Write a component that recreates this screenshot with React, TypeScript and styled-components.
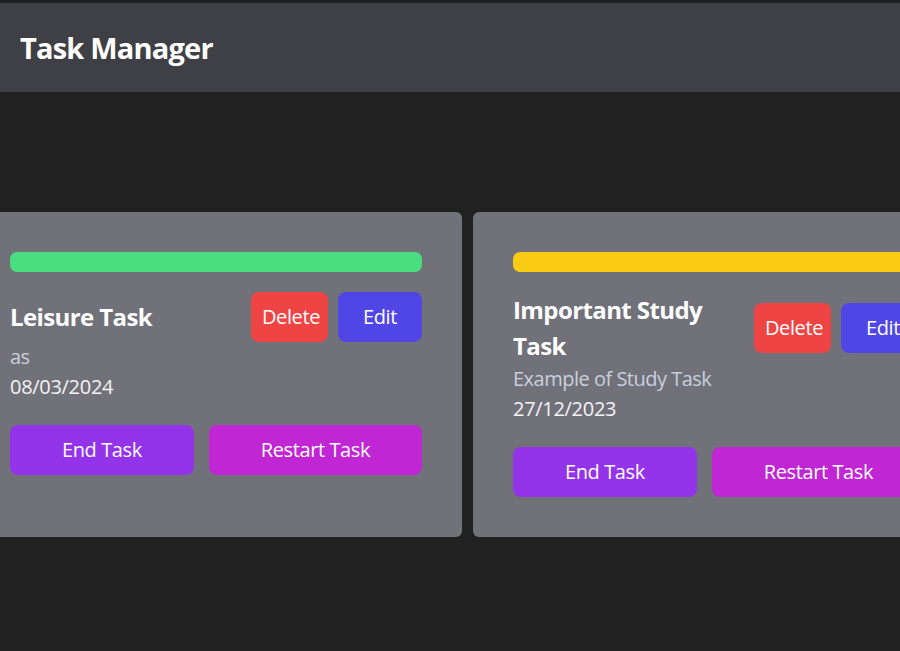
import React from "react";
import styled, { createGlobalStyle } from "styled-components";

const GlobalStyle = createGlobalStyle`
  html, body {
    margin: 0;
    padding: 0;
    background: #212121;
    font-family: "Segoe UI", "Open Sans", "Noto Sans", sans-serif;
    overflow: hidden;
  }
`;

const Header = styled.header`
  margin-top: 3px;
  height: 89px;
  background: #3f4046;
  display: flex;
  align-items: center;
  padding: 0 20px;
  box-sizing: border-box;
`;

const Title = styled.h1`
  margin: 0;
  color: #ffffff;
  font-size: 29px;
  line-height: 36px;
  font-weight: 700;
  letter-spacing: -0.8px;
`;

const Board = styled.main`
  padding-top: 120px;
  display: flex;
  align-items: stretch;
  gap: 11px;
  margin-left: -30px;
`;

const Card = styled.section`
  flex: 0 0 492px;
  box-sizing: border-box;
  padding: 40px;
  background: #71717a;
  border-radius: 6px;
  display: flex;
  flex-direction: column;
`;

const Bar = styled.div<{ $color: string }>`
  height: 20px;
  border-radius: 7px;
  background: ${(p) => p.$color};
  margin-bottom: 20px;
`;

const TopRow = styled.div`
  display: flex;
  align-items: center;
  justify-content: space-between;
  gap: 10px;
`;

const TaskName = styled.h2`
  margin: 0;
  flex: 1 1 auto;
  color: #ffffff;
  font-size: 24px;
  line-height: 36px;
  font-weight: 700;
  letter-spacing: -0.6px;
`;

const Actions = styled.div`
  display: flex;
  gap: 10px;
  flex-shrink: 0;
`;

const Button = styled.button<{ $bg: string; $width?: number }>`
  border: none;
  border-radius: 8px;
  height: 50px;
  padding: 0 11px;
  ${(p) => (p.$width ? `width: ${p.$width}px;` : "")}
  background: ${(p) => p.$bg};
  color: #ffffff;
  font-family: inherit;
  font-size: 20px;
  line-height: 28px;
  letter-spacing: -0.4px;
  cursor: pointer;
`;

const Description = styled.p`
  margin: 0;
  padding-top: 1px;
  color: #c9d0dc;
  font-size: 20px;
  line-height: 28px;
  letter-spacing: -0.5px;
`;

const DateText = styled.p`
  margin: 0;
  padding-top: 2px;
  color: #f4f4f5;
  font-size: 20px;
  line-height: 28px;
  letter-spacing: -0.3px;
`;

const BottomRow = styled.div`
  margin-top: 24px;
  display: flex;
  gap: 15px;
`;

const WideButton = styled(Button)`
  flex: 1 1 auto;
`;

type Task = {
  name: string;
  description: string;
  date: string;
  color: string;
};

const tasks: Task[] = [
  { name: "Leisure Task", description: "as", date: "08/03/2024", color: "#4ade80" },
  {
    name: "Important Study Task",
    description: "Example of Study Task",
    date: "27/12/2023",
    color: "#facc15",
  },
];

const TaskCard: React.FC<{ task: Task }> = ({ task }) => (
  <Card>
    <Bar $color={task.color} />
    <TopRow>
      <TaskName>{task.name}</TaskName>
      <Actions>
        <Button $bg="#ef4444" $width={77}>
          Delete
        </Button>
        <Button $bg="#4f46e5" $width={84}>
          Edit
        </Button>
      </Actions>
    </TopRow>
    <Description>{task.description}</Description>
    <DateText>{task.date}</DateText>
    <BottomRow>
      <WideButton $bg="#9333ea">End Task</WideButton>
      <WideButton $bg="#c026d3">Restart Task</WideButton>
    </BottomRow>
  </Card>
);

export default function App() {
  return (
    <>
      <GlobalStyle />
      <Header>
        <Title>Task Manager</Title>
      </Header>
      <Board>
        {tasks.map((t) => (
          <TaskCard key={t.name} task={t} />
        ))}
      </Board>
    </>
  );
}
